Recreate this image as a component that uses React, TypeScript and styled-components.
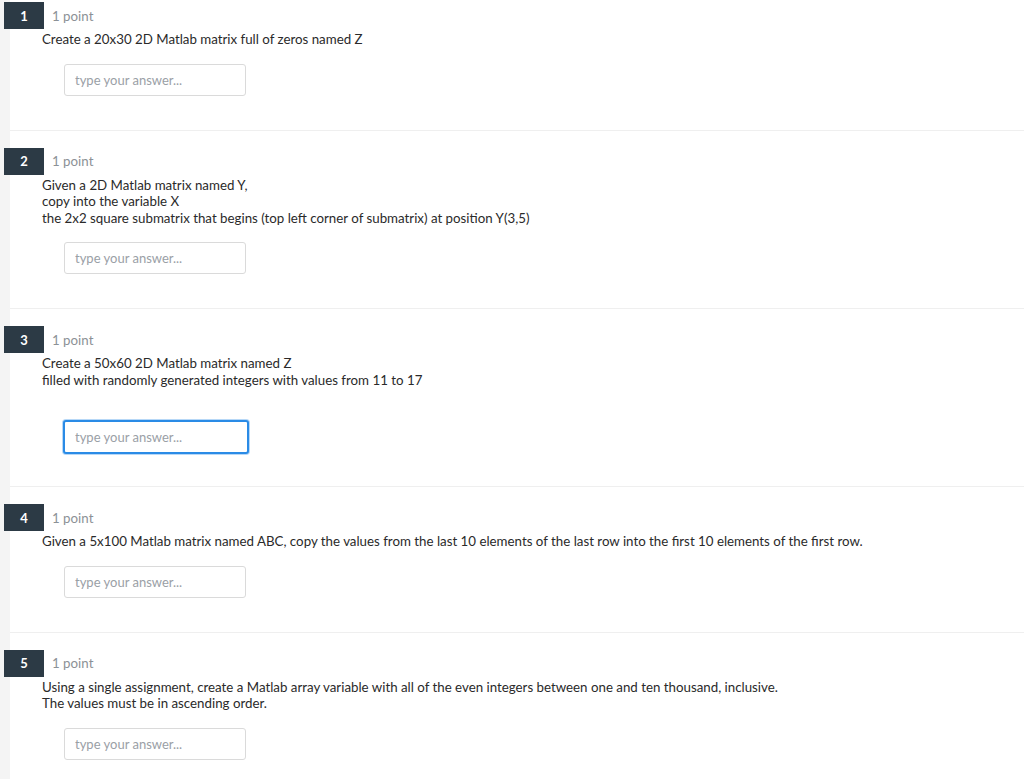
import styled, { createGlobalStyle } from "styled-components";

const GlobalStyle = createGlobalStyle`
  html, body {
    margin: 0;
    padding: 0;
    background: #ffffff;
  }
  body {
    font-family: Lato, "Open Sans", Arial, sans-serif;
    -webkit-font-smoothing: antialiased;
  }
`;

type Question = {
  num: number;
  lines: string[];
  focused?: boolean;
};

const questions: Question[] = [
  { num: 1, lines: ["Create a 20x30 2D Matlab matrix full of zeros named Z"] },
  {
    num: 2,
    lines: [
      "Given a 2D Matlab matrix named Y,",
      "copy into the variable X",
      "the 2x2 square submatrix that begins (top left corner of submatrix) at position Y(3,5)",
    ],
  },
  {
    num: 3,
    lines: [
      "Create a 50x60 2D Matlab matrix named Z",
      "filled with randomly generated integers with values from 11 to 17",
    ],
    focused: true,
  },
  {
    num: 4,
    lines: [
      "Given a 5x100 Matlab matrix named ABC, copy the values from the last 10 elements of the last row into the first 10 elements of the first row.",
    ],
  },
  {
    num: 5,
    lines: [
      "Using a single assignment, create a Matlab array variable with all of the even integers between one and ten thousand, inclusive.",
      "The values must be in ascending order.",
    ],
  },
];

export default function App() {
  return (
    <>
      <GlobalStyle />
      <Page>
        {questions.map((q, i) => (
          <Section key={q.num} $first={i === 0}>
            <Header>
              <Badge>{q.num}</Badge>
              <Points>1 point</Points>
            </Header>
            <Prompt>
              {q.lines.map((l) => (
                <div key={l}>{l}</div>
              ))}
            </Prompt>
            <AnswerRow $focused={q.focused}>
              <Answer type="text" placeholder="type your answer..." $focused={q.focused} />
            </AnswerRow>
          </Section>
        ))}
      </Page>
    </>
  );
}

const Page = styled.div`
  min-height: 779px;
  background: linear-gradient(to right, #f4f4f4 10px, #ffffff 10px);
`;

const Section = styled.section<{ $first?: boolean }>`
  margin-left: 10px;
  padding: ${(p) => (p.$first ? "2px" : "17px")} 0 34px 0;
  border-bottom: 1px solid #efefef;
`;

const Header = styled.div`
  display: flex;
  align-items: center;
  gap: 8px;
  margin-left: -6px;
`;

const Badge = styled.div`
  width: 40px;
  height: 27px;
  background: #2c3a45;
  color: #ffffff;
  font-size: 13px;
  font-weight: 700;
  display: flex;
  align-items: center;
  justify-content: center;
`;

const Points = styled.span`
  font-size: 13.3px;
  color: #8c9196;
`;

const Prompt = styled.div`
  margin: 2px 0 0 32px;
  font-size: 13.3px;
  line-height: 16.5px;
  color: #2a2a2a;
`;

const AnswerRow = styled.div<{ $focused?: boolean }>`
  margin: ${(p) => (p.$focused ? "32px 0 -2px 53px" : "16px 0 0 54px")};
`;

const Answer = styled.input<{ $focused?: boolean }>`
  box-sizing: border-box;
  display: block;
  width: ${(p) => (p.$focused ? "186px" : "182px")};
  height: ${(p) => (p.$focused ? "34px" : "32px")};
  padding: 0 10px;
  border: ${(p) => (p.$focused ? "2px solid #2a8be6" : "1px solid #dadada")};
  box-shadow: ${(p) => (p.$focused ? "0 0 0 1px #b7d8f7" : "none")};
  border-radius: 3px;
  outline: none;
  font-family: Lato, "Open Sans", Arial, sans-serif;
  font-size: 13px;
  color: #333;
  background: #fff;
  &::placeholder {
    color: #9aa0a6;
  }
`;
